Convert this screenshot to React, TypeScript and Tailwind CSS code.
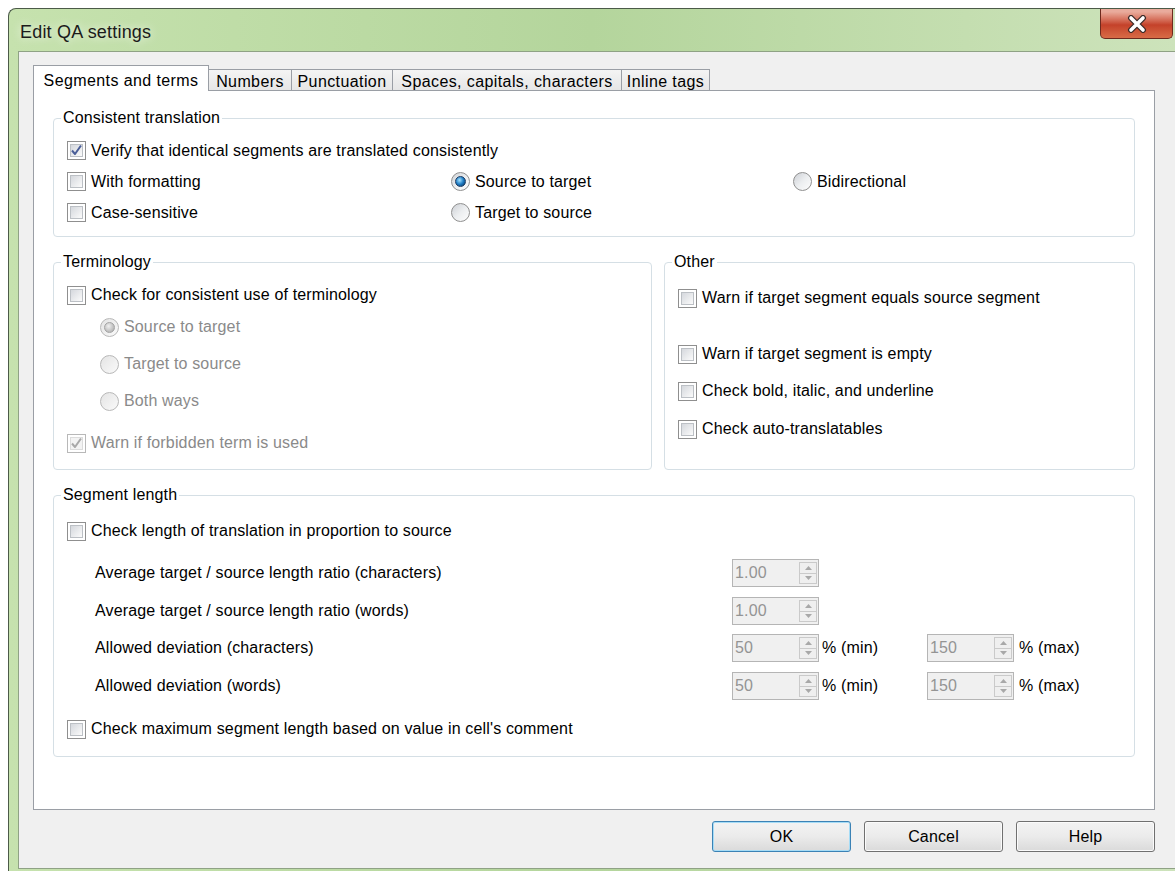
import React from 'react';
import clsx from 'clsx';

type BoxProps = { checked?: boolean; disabled?: boolean };

// Aero-style checkbox
function CheckBox({ checked, disabled }: BoxProps) {
  return (
    <span
      className={clsx(
        'relative flex h-[19px] w-[19px] shrink-0 border bg-white p-[2px]',
        disabled ? 'border-[#b8b8b8]' : 'border-[#8f8f8f]'
      )}
    >
      <span
        className={clsx(
          'flex-1 border',
          disabled
            ? 'border-[#dcdcdc] bg-[#f3f3f3]'
            : 'border-[#bcc0c5] bg-linear-to-br from-[#d5d8dd] to-[#fbfbfb]'
        )}
      />
      {checked && (
        <svg className="absolute inset-0" width="17" height="17" viewBox="0 0 17 17" fill="none">
          <path
            d="M4 8.5 7 12 13 3.5"
            stroke={disabled ? '#a9a9a9' : '#4a5e98'}
            strokeWidth="2"
            strokeLinejoin="round"
          />
        </svg>
      )}
    </span>
  );
}

function Radio({ checked, disabled }: BoxProps) {
  return (
    <span
      className={clsx(
        'flex h-[19px] w-[19px] shrink-0 items-center justify-center rounded-full border',
        disabled
          ? 'border-[#b8b8b8] bg-linear-to-br from-[#e4e4e4] to-[#fafafa]'
          : 'border-[#8f8f8f] bg-linear-to-br from-[#cdd0d5] via-[#eceef0] to-[#fdfdfd]'
      )}
    >
      {checked && (
        <span
          className={clsx(
            'h-[11px] w-[11px] rounded-full border',
            disabled
              ? 'border-[#a3a3a3] bg-radial-[at_40%_35%] from-[#f0f0f0] to-[#a3a3a3]'
              : 'border-[#1a3b63] bg-radial-[at_40%_35%] from-[#a6e3ff] via-[#1f7dc5] to-[#0a2d55]'
          )}
        />
      )}
    </span>
  );
}

function Spin({ value }: { value: string }) {
  return (
    <div className="flex h-[28px] w-[87px] shrink-0 items-center border border-[#b5b5b5] bg-[#f0f0f0]">
      <span className="flex-1 pl-[2px] text-[#949494]">{value}</span>
      <div className="mr-[1px] flex h-[22px] w-[18px] flex-col">
        <span className="flex flex-1 items-center justify-center border border-[#cacaca] bg-[#efefef]">
          <svg width="7" height="4" viewBox="0 0 7 4">
            <path d="M0 4 3.5 0 7 4Z" fill="#a8a8a8" />
          </svg>
        </span>
        <span className="-mt-px flex flex-1 items-center justify-center border border-[#cacaca] bg-[#efefef]">
          <svg width="7" height="4" viewBox="0 0 7 4">
            <path d="M0 0 3.5 4 7 0Z" fill="#a8a8a8" />
          </svg>
        </span>
      </div>
    </div>
  );
}

function Group({ title, className, children }: { title: string; className?: string; children: React.ReactNode }) {
  return (
    <fieldset className={clsx('rounded-[4px] border border-[#d5dfe5] pl-[7px] pr-[8px]', className)}>
      <legend className="px-[2px] leading-[20px]">{title}</legend>
      <div className="ml-[6px]">{children}</div>
    </fieldset>
  );
}

function Item({ label, dim, children }: { label: string; dim?: boolean; children: React.ReactNode }) {
  return (
    <div className={clsx('flex items-center gap-[5px]', dim && 'text-[#8a8a8a]')}>
      {children}
      <span>{label}</span>
    </div>
  );
}

function TabHeader() {
  const tabs = [
    { label: 'Numbers', w: 'w-[83px]' },
    { label: 'Punctuation', w: 'w-[101px]' },
    { label: 'Spaces, capitals, characters', w: 'w-[229px]' },
    { label: 'Inline tags', w: 'w-[88px]' },
  ];
  return (
    <div className="flex h-[25px] items-end tracking-[0.4px]">
      <div className="relative z-10 -mb-px flex h-[26px] w-[176px] justify-center border-x border-t border-[#9a9ea5] bg-white pt-[3px]">
        Segments and terms
      </div>
      {tabs.map((t) => (
        <div
          key={t.label}
          className={clsx(
            'flex h-[21px] justify-center border-r border-t border-[#9a9ea5] bg-linear-to-b from-[#f4f4f4] to-[#e6e6e6] pt-[2px] leading-[19px]',
            t.w
          )}
        >
          {t.label}
        </div>
      ))}
    </div>
  );
}

function DialogButton({ label, primary }: { label: string; primary?: boolean }) {
  return (
    <button
      className={clsx(
        'h-[31px] w-[139px] rounded-[3px] border bg-linear-to-b from-[#f3f3f3] via-[#ebebeb] to-[#dadada] text-[16px]',
        primary ? 'border-[#3b82b5] shadow-[inset_0_0_0_1px_#a6dcf6]' : 'border-[#707070] shadow-[inset_0_0_0_1px_#fbfbfb]'
      )}
    >
      {label}
    </button>
  );
}

export default function App() {
  return (
    <div className="h-[871px] w-[1175px] overflow-hidden bg-white pl-[8px] pt-[8px] font-['Liberation_Sans',Arial,sans-serif] text-[16px] tracking-[0.15px] text-black">
      <div className="flex h-[863px] flex-col rounded-tl-[8px] border-l border-t border-[#4b5a48] bg-linear-to-r from-[#c6e2ae] via-[#b4d59c] to-[#cde3bb]">
        {/* title bar */}
        <div className="flex h-[42px] shrink-0 items-start justify-between">
          <div className="mt-[12px] pl-[11px] text-[18px] leading-[22px] tracking-[0.2px] text-[#1b1b1b] [text-shadow:0_0_10px_rgba(255,255,255,0.9)]">
            Edit QA settings
          </div>
          <div className="mr-[2px] flex h-[30px] w-[73px] items-center justify-center rounded-b-[5px] border border-t-0 border-[#6e2a1e] bg-linear-to-b from-[#e9ab9c] from-10% via-[#c4412a] via-55% to-[#d86b46]">
            <svg width="22" height="18" viewBox="0 0 22 18">
              <path d="M5 3 17 15M17 3 5 15" stroke="#3a2a28" strokeWidth="6" strokeLinecap="round" />
              <path d="M5 3 17 15M17 3 5 15" stroke="#ffffff" strokeWidth="3.6" strokeLinecap="round" />
            </svg>
          </div>
        </div>

        {/* client area */}
        <div className="mb-[2px] ml-[9px] flex flex-1 flex-col border-b border-l border-t border-[#8fa285] bg-[#f0f0f0] pl-[14px] pt-[13px]">
          <TabHeader />
          <div className="h-[720px] w-[1122px] border border-[#9a9ea5] bg-white px-[19px] pt-[17px]">
            <Group title="Consistent translation" className="pb-[8px]">
              <div className="pt-[7px]">
                <div className="flex h-[31px] items-center">
                  <Item label="Verify that identical segments are translated consistently">
                    <CheckBox checked />
                  </Item>
                </div>
                <div className="flex h-[31px] items-center">
                  <div className="w-[384px]">
                    <Item label="With formatting">
                      <CheckBox />
                    </Item>
                  </div>
                  <div className="w-[342px]">
                    <Item label="Source to target">
                      <Radio checked />
                    </Item>
                  </div>
                  <Item label="Bidirectional">
                    <Radio />
                  </Item>
                </div>
                <div className="flex h-[31px] items-center">
                  <div className="w-[384px]">
                    <Item label="Case-sensitive">
                      <CheckBox />
                    </Item>
                  </div>
                  <Item label="Target to source">
                    <Radio />
                  </Item>
                </div>
              </div>
            </Group>

            <div className="mt-[15px] flex gap-[12px]">
              <Group title="Terminology" className="w-[599px] pb-[11px]">
                <div className="flex flex-col pt-[8px]">
                  <div className="flex h-[30px] items-center">
                    <Item label="Check for consistent use of terminology">
                      <CheckBox />
                    </Item>
                  </div>
                  <div className="ml-[33px] mt-[2px] flex h-[30px] items-center">
                    <Item label="Source to target" dim>
                      <Radio checked disabled />
                    </Item>
                  </div>
                  <div className="ml-[33px] mt-[7px] flex h-[30px] items-center">
                    <Item label="Target to source" dim>
                      <Radio disabled />
                    </Item>
                  </div>
                  <div className="ml-[33px] mt-[7px] flex h-[30px] items-center">
                    <Item label="Both ways" dim>
                      <Radio disabled />
                    </Item>
                  </div>
                  <div className="mt-[12px] flex h-[30px] items-center">
                    <Item label="Warn if forbidden term is used" dim>
                      <CheckBox checked disabled />
                    </Item>
                  </div>
                </div>
              </Group>

              <Group title="Other" className="flex-1">
                <div className="flex flex-col pt-[11px]">
                  <div className="flex h-[30px] items-center">
                    <Item label="Warn if target segment equals source segment">
                      <CheckBox />
                    </Item>
                  </div>
                  <div className="mt-[26px] flex h-[30px] items-center">
                    <Item label="Warn if target segment is empty">
                      <CheckBox />
                    </Item>
                  </div>
                  <div className="mt-[7px] flex h-[30px] items-center">
                    <Item label="Check bold, italic, and underline">
                      <CheckBox />
                    </Item>
                  </div>
                  <div className="mt-[8px] flex h-[30px] items-center">
                    <Item label="Check auto-translatables">
                      <CheckBox />
                    </Item>
                  </div>
                </div>
              </Group>
            </div>

            <Group title="Segment length" className="mt-[15px] pb-[12px]">
              <div className="flex flex-col pt-[11px]">
                <div className="flex h-[30px] items-center">
                  <Item label="Check length of translation in proportion to source">
                    <CheckBox />
                  </Item>
                </div>
                <div className="mt-[13px] flex h-[28px] items-center">
                  <span className="w-[665px] pl-[28px]">Average target / source length ratio (characters)</span>
                  <Spin value="1.00" />
                </div>
                <div className="mt-[10px] flex h-[28px] items-center">
                  <span className="w-[665px] pl-[28px]">Average target / source length ratio (words)</span>
                  <Spin value="1.00" />
                </div>
                <div className="mt-[9px] flex h-[28px] items-center">
                  <span className="w-[665px] pl-[28px]">Allowed deviation (characters)</span>
                  <Spin value="50" />
                  <span className="w-[108px] pl-[3px]">% (min)</span>
                  <Spin value="150" />
                  <span className="pl-[5px]">% (max)</span>
                </div>
                <div className="mt-[10px] flex h-[28px] items-center">
                  <span className="w-[665px] pl-[28px]">Allowed deviation (words)</span>
                  <Spin value="50" />
                  <span className="w-[108px] pl-[3px]">% (min)</span>
                  <Spin value="150" />
                  <span className="pl-[5px]">% (max)</span>
                </div>
                <div className="mt-[14px] flex h-[30px] items-center">
                  <Item label="Check maximum segment length based on value in cell's comment">
                    <CheckBox />
                  </Item>
                </div>
              </div>
            </Group>
          </div>

          <div className="mt-[11px] flex w-[1122px] justify-end gap-[13px]">
            <DialogButton label="OK" primary />
            <DialogButton label="Cancel" />
            <DialogButton label="Help" />
          </div>
        </div>
      </div>
    </div>
  );
}
